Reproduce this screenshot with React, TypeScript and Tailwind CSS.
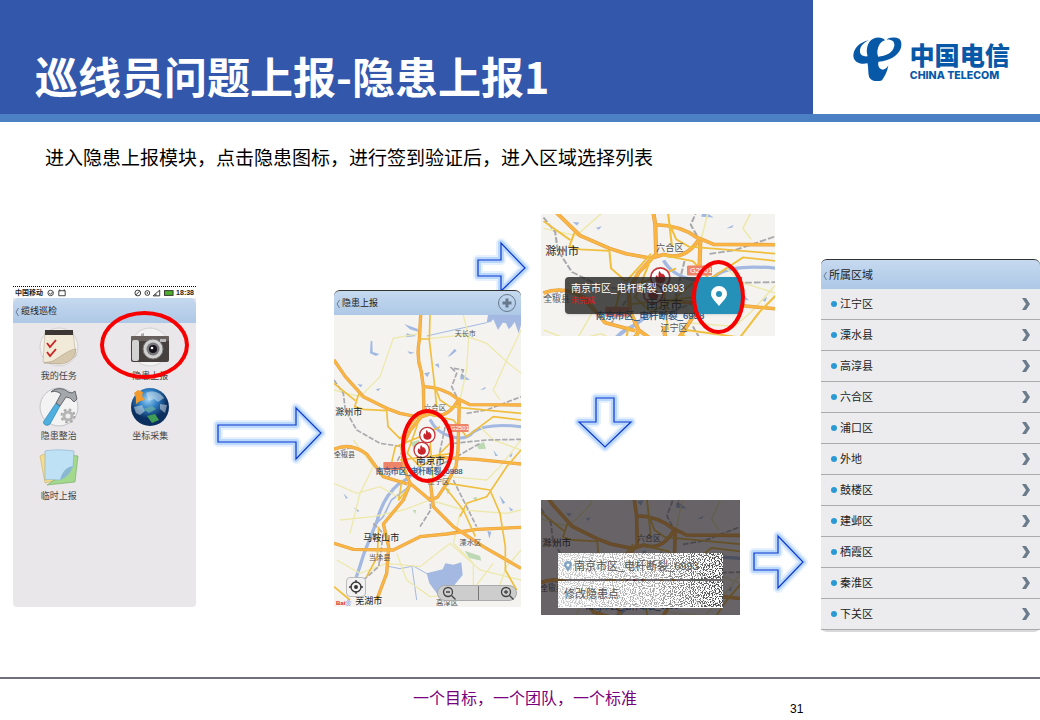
import React from "react";

const CJK = "font-['Liberation_Sans','Noto_Sans_CJK_SC',sans-serif]";

function Logo() {
  return (
    <svg viewBox="156 108 484 142" className="h-12 w-40" role="img" aria-label="中国电信">
      <g fill="#0858a8">
        <path d="M208 122C178 127 160 148 160 169C161 188 180 197 203 192C206 205 204 222 208 234C214 246 230 248 246 244C254 234 263 218 266 198C260 208 254 212 247 211C236 207 234 197 236 187C270 186 296 168 304 146C309 126 302 114 284 114C273 113 266 116 260 120C276 119 286 125 284 140C280 160 258 171 235 172C230 160 233 146 240 134C244 127 250 124 256 122C248 113 232 112 220 118C206 124 200 142 201 160L203 171C188 172 180 166 180 154C181 139 192 128 208 122Z" />
        <text x="330" y="198" fontSize="76" fontWeight="900" className={CJK}>中国电信</text>
        <text x="331" y="239" fontSize="32" fontWeight="800" className="font-['Inter','Liberation_Sans',sans-serif]">CHINA TELECOM</text>
      </g>
    </svg>
  );
}

function Arrow({ points, box, className }: { points: string; box: string; className: string }) {
  return (
    <svg viewBox={box} className={className} aria-hidden="true">
      <g fill="none" strokeLinejoin="round">
        <polygon points={points} stroke="#b9d8fc" strokeOpacity="0.35" strokeWidth="10" />
        <polygon points={points} stroke="#9cc6fa" strokeOpacity="0.6" strokeWidth="6" />
        <polygon points={points} stroke="#0b37cf" strokeWidth="1.2" strokeLinejoin="miter" />
      </g>
    </svg>
  );
}

function Flame({ x, y }: { x: number; y: number }) {
  return (
    <g transform={`translate(${x} ${y})`}>
      <circle r="23" fill="#fff" stroke="#c8363c" strokeWidth="4" />
      <path
        d="M-2-16C2-8 6-5 6-10C12-3 14 2 12 7C10 13 5 14 0 14C-7 14-12 10-12 3C-12-1-10-4-8-6C-7-2-6-1-4-2C-5-7-4-12-2-16Z"
        fill="#c8262c"
      />
    </g>
  );
}

const motorways =
  "M302 105L298 180Q288 230 304 276L310 320L312 400L270 452L246 500L250 560L270 610L330 660L352 652L374 620L408 560L414 510L418 366M42 240L76 290L130 350L200 385L240 400L300 412L330 402Q380 420 414 362M312 320Q370 322 410 355L450 374L603 375M42 508Q90 486 140 522L190 590L262 612M330 600L340 680L400 740L490 800L603 865M270 612L250 660L190 732L206 800L200 880L170 960M42 790L100 808L220 810L300 770L380 762L470 748L603 742M360 532L470 538L603 552";

const places = [
  { name: "天长市", x: 404, y: 168, size: 21, fill: "#555" },
  { name: "六合区", x: 312, y: 391, size: 22, fill: "#555" },
  { name: "滁州市", x: 46, y: 404, size: 27, fill: "#222" },
  { name: "全椒县", x: 42, y: 532, size: 21, fill: "#555" },
  { name: "江宁区", x: 322, y: 613, size: 22, fill: "#555" },
  { name: "马鞍山市", x: 130, y: 784, size: 27, fill: "#222" },
  { name: "当涂县", x: 146, y: 841, size: 22, fill: "#555" },
  { name: "溧水区", x: 418, y: 794, size: 22, fill: "#555" },
  { name: "高淳区", x: 348, y: 975, size: 22, fill: "#555" },
  { name: "芜湖市", x: 106, y: 972, size: 27, fill: "#222" },
];

interface CityMapProps {
  box: string;
  label: string;
  className: string;
  top: number;
  bottom: number;
  scaleY?: number;
}

function CityMap({ box, label, className, top, bottom, scaleY = 1 }: CityMapProps) {
  const toY = (y: number) => (y - top) * scaleY;
  return (
    <svg viewBox={box} preserveAspectRatio="xMidYMid slice" className={className} role="img" aria-label="南京市地图">
      <g transform={`translate(0 ${-top * scaleY}) scale(1 ${scaleY})`}>
        <rect width="700" height="1100" fill="#f5f3f0" />
        <g fill="#a3b9e2">
          <path d="M504 105L500 128L512 126L520 118L534 150L548 128L558 130L566 148L574 140L584 126L596 160L603 135V105Z" />
          <path d="M320 880L368 868L376 850L400 854L424 847L428 885L404 914L352 942L328 910Z" />
          <path d="M152 182L157 184L158 216L178 222L168 228L150 220Z" />
          <path d="M252 132L292 146L296 156L270 148ZM260 160L290 168L258 172Z" />
          <path d="M382 232L404 206L410 212L396 224ZM424 280L450 300L420 298ZM480 330L498 320L494 328ZM312 280L330 276L322 292ZM344 254L356 250L358 264Z" />
          <path d="M112 312L128 314L122 322ZM168 328L182 324L174 334ZM262 214L284 218L270 222ZM502 752L514 756L508 776Z" />
          <path d="M538 646L556 668L548 672ZM566 680L580 690L572 694ZM100 682L118 692L114 696ZM70 640L84 654L78 656ZM520 510L534 528L526 528ZM566 528L578 518L574 532Z" />
        </g>
        <path
          d="M434 812L480 828L484 842L448 834ZM470 496L492 486L498 506L476 508ZM270 488L296 480L306 496L280 502ZM376 624L390 628L384 644ZM278 690L288 690L286 702ZM458 654L470 650L472 666Z"
          fill="#bcd9b4"
        />
        <g fill="none" stroke="#a3b9e2" strokeLinejoin="round">
          <path d="M300 560Q262 600 236 612Q190 650 172 720Q148 780 132 820Q120 860 106 900" strokeWidth="10" />
          <path d="M268 620L214 660L190 710L160 740" strokeWidth="5" />
          <path d="M330 418Q350 460 402 472Q440 480 460 456Q500 428 603 440" strokeWidth="9" />
          <path d="M320 168L400 150L500 128M200 858L240 866L280 858L326 884M276 860L290 960" strokeWidth="3" />
        </g>
        <g fill="none" stroke="#ede9ac" strokeWidth="4">
          <path d="M328 176L430 165L500 190L560 245L603 280M42 330L120 350L180 290L220 175L300 160M430 105L446 170L440 270L420 360" />
          <path d="M603 150L560 240L520 330L540 360M42 610L110 640L180 620L250 660M60 720L160 710L250 690L330 660L430 690L560 700L603 690" />
          <path d="M603 480L540 560L500 600L390 590M100 480L160 560L120 640L90 760M230 820L260 900L330 950L450 940L520 850M420 700L400 790L460 850L460 920" />
          <path d="M50 840L120 880L200 850L300 860L390 790L480 870L603 900M530 940L560 860L603 810M480 440L520 480L603 510" />
        </g>
        <g fill="none" stroke="#a9a9ad" strokeWidth="5" strokeDasharray="16 5">
          <path d="M42 300L70 340L76 390L110 450L180 490L250 500M410 350L395 320L410 280L395 264L430 270L424 290M440 400L500 390L603 350" />
          <path d="M400 490L500 480L603 478M42 520L100 500M250 510L200 600M330 650L332 690L300 740M160 730L190 760L176 860L130 900M400 600L440 680L470 740M380 420L350 560L410 530L480 490" />
        </g>
        <path d={motorways} fill="none" stroke="#e2a143" strokeWidth="10" strokeLinejoin="round" />
        <path d={motorways} fill="none" stroke="#fbb545" strokeWidth="7" strokeLinejoin="round" />
        <g fill="none" stroke="#f0bf3e" strokeWidth="5" strokeLinejoin="round">
          <path d="M330 105L328 180L335 240L342 300L350 380M300 177L330 177M345 320L360 360L390 380L603 400M116 342L104 380L130 388L200 392L204 440L240 476L300 400M42 310L106 362" />
          <path d="M330 404L400 420L440 470L520 410L603 420M300 412L262 520L300 560L350 530L400 480M212 560L226 500L300 470L360 440M330 480L340 610M240 540L400 520" />
          <path d="M384 610L510 630L540 700L556 800L556 870L590 930M374 620L430 690L466 770M420 710L440 670L500 650L560 560L603 510M176 740L172 830L140 890M42 920L90 960M246 600L236 660L268 620" />
        </g>
      </g>
      <g className={CJK}>
        {places
          .filter(({ y }) => y > top + 20 && y < bottom)
          .map(({ name, x, y, size, fill }) => (
            <text key={name} x={x} y={toY(y)} fontSize={size} fill={fill}>{name}</text>
          ))}
        <rect x="386" y={toY(432)} width="60" height="24" rx="3" fill="#ee8467" />
        <text x="393" y={toY(432) + 19} fontSize="18" fill="#fff">G2501</text>
        <rect x="190" y={toY(546)} width="58" height="24" rx="3" fill="#ee8467" />
        <Flame x={322} y={toY(465)} />
        <Flame x={305} y={toY(510)} />
        <text x="288" y={toY(552)} fontSize="29" fill="#222">南京市</text>
        <text x="167" y={toY(581)} fontSize="23" fill="#1d5288" stroke="#1d5288" strokeWidth="0.5">{label}</text>
      </g>
    </svg>
  );
}

function TitleBar({ title, className, children }: { title: string; className: string; children?: React.ReactNode }) {
  return (
    <header className={`flex items-center justify-between rounded-t-md bg-linear-to-b from-[#c6d9ef] to-[#adc8e6] pr-1 pl-0.5 ${className}`}>
      <button className="flex items-center gap-0.5 pt-0.5 text-[#222]">
        <svg viewBox="0 0 4 10" className="h-2.5 w-1" fill="none" stroke="#6b7b8e" aria-hidden="true">
          <path d="M3.5 1L1 5L3.5 9" />
        </svg>
        {title}
      </button>
      {children}
    </header>
  );
}

function TaskIcon() {
  return (
    <svg viewBox="0 0 40 40" className="size-10" aria-hidden="true">
      <circle cx="20" cy="20" r="19" fill="#f3f2f0" stroke="#d2d0d0" />
      <path d="M6 5H34L37 29L20 37L4 35Z" fill="#f2ead8" stroke="#b9ad98" strokeWidth=".6" />
      <path d="M6 3H34V8H6Z" fill="#3c3634" />
      <path d="M37 22C29 23 24 28 14 34L5 36L22 37C30 36 36 32 37 22Z" fill="#d6c8ad" stroke="#a5987f" strokeWidth=".5" />
      <path d="M8 16L11 20L17 13M8 25L11 29L17 22" fill="none" stroke="#cc2222" strokeWidth="1.8" />
    </svg>
  );
}

function CameraIcon() {
  return (
    <svg viewBox="0 0 40 40" className="size-10" aria-hidden="true">
      <circle cx="20" cy="20" r="19" fill="#f3f2f2" stroke="#d2d0d0" />
      <path d="M11 7L14 6V9H11Z" fill="#aaa" />
      <rect x="1" y="9" width="38" height="26" rx="2" fill="#46403e" />
      <rect x="1" y="9" width="38" height="5" rx="1" fill="#67605d" />
      <rect x="2" y="13" width="7" height="21" rx="2" fill="#d2d2d2" />
      <rect x="30" y="12" width="6" height="3" fill="#b8b8b8" />
      <circle cx="23" cy="22" r="10" fill="#cfcfcf" stroke="#757575" />
      <circle cx="23" cy="22" r="6.500" fill="#77777b" />
      <circle cx="23" cy="22" r="4" fill="#15121c" />
      <circle cx="22" cy="21" r="1.300" fill="#fff" />
    </svg>
  );
}

function ToolIcon() {
  return (
    <svg viewBox="0 0 40 40" className="size-10" aria-hidden="true">
      <circle cx="20" cy="20" r="19" fill="#f3f3f4" stroke="#c4c4c8" />
      <path d="M5 34L17 16L21 19L11 37C8 40 3 37 5 34Z" fill="#4fb0df" stroke="#2b83b5" strokeWidth=".7" />
      <path d="M17 16L22 7C18 4 15 4 12 5C17 0 25 1 29 5L33 6L36 4L38 12L35 15L31 11L27 10L21 19Z" fill="#a4a8ac" stroke="#4b4f54" strokeWidth=".8" />
      <circle cx="29" cy="29" r="4" fill="#eee" stroke="#b5b5b5" strokeWidth="3" />
      <circle cx="29" cy="29" r="6.500" fill="none" stroke="#a8a8a8" strokeWidth="2" strokeDasharray="2.600 2.500" />
    </svg>
  );
}

function GlobeIcon() {
  return (
    <svg viewBox="0 0 40 40" className="size-10" aria-hidden="true">
      <defs>
        <radialGradient id="ocean" cx=".45" cy=".3">
          <stop offset="0" stopColor="#9fd3f5" />
          <stop offset=".5" stopColor="#2f7fc4" />
          <stop offset="1" stopColor="#0b2f60" />
        </radialGradient>
      </defs>
      <circle cx="20" cy="20" r="19" fill="url(#ocean)" />
      <path d="M16 6C22 3 30 5 34 11L28 15L24 12L19 14ZM30 17L37 18L35 26L30 22ZM4 20L12 18L15 24L10 28L6 26Z" fill="#dfe9ee" fillOpacity=".5" />
      <path d="M17 29L25 27L29 33L22 36Z" fill="#3f9c55" />
      <path d="M13 22L22 19L26 22L19 26Z" fill="#6fb0a0" fillOpacity=".7" />
      <path d="M4 6L8 3L13 5L12 9L15 13L10 14L6 17L6 11Z" fill="#f29a2e" />
    </svg>
  );
}

function NotesIcon() {
  return (
    <svg viewBox="0 0 40 40" className="size-10" aria-hidden="true">
      <path d="M1 9L10 5L18 33L6 36Z" fill="#f3dc8e" stroke="#c9b264" strokeWidth=".6" />
      <path d="M22 7L39 9L36 35L8 38L20 30Z" fill="#a3d98c" stroke="#74a862" strokeWidth=".6" />
      <path d="M6 4C16 2 26 3 35 4L34 20L21 33C16 33 10 32 6 33Z" fill="#bfe1f6" stroke="#86aecb" strokeWidth=".6" />
      <path d="M34 19C28 20 23 24 21 33C27 31 32 26 34 19Z" fill="#8ab8d2" />
    </svg>
  );
}

const apps = [
  { name: "我的任务", Icon: TaskIcon },
  { name: "隐患上报", Icon: CameraIcon },
  { name: "隐患整治", Icon: ToolIcon },
  { name: "坐标采集", Icon: GlobeIcon },
  { name: "临时上报", Icon: NotesIcon },
];

function StatusBar() {
  return (
    <div className="flex h-3 items-center justify-between border-t border-dotted border-black bg-white px-0.5 text-[7px] leading-none font-bold text-[#222]">
      <span className="flex items-center gap-1">
        中国移动
        <svg viewBox="0 0 22 8" className="h-2 w-5" fill="none" stroke="#333" aria-hidden="true">
          <circle cx="4" cy="4" r="3" />
          <path d="M2.500 4L4 5.500L6 3M13 1.500H20V7H13ZM14 0V2M19 0V2" />
        </svg>
      </span>
      <span className="flex items-center gap-0.5">
        <svg viewBox="0 0 42 8" className="h-2 w-10" fill="none" stroke="#333" aria-hidden="true">
          <circle cx="4" cy="4" r="3" />
          <path d="M2 6L6 2" />
          <circle cx="14" cy="4" r="2.500" />
          <path d="M14 3V5M20 7L27 1V7ZM23 7V5" />
          <rect x="32" y="1.500" width="9" height="5" fill="#4caf2b" />
        </svg>
        18:38
      </span>
    </div>
  );
}

function HomePhone() {
  return (
    <section className="mt-[72px] flex h-[321px] w-[183px] shrink-0 flex-col rounded-b-sm bg-[#e9e7ea]" aria-label="缆线巡检">
      <StatusBar />
      <TitleBar title="缆线巡检" className="h-[25px] text-[9px]" />
      <div className="relative grid grid-cols-2 gap-y-0.5 pt-1">
        {apps.map(({ name, Icon }) => (
          <button key={name} className="flex flex-col items-center text-[9px] leading-[18px] text-[#444]">
            <Icon />
            {name}
          </button>
        ))}
        <div className="absolute -top-3 left-[87px] h-[68px] w-[89px] rounded-[50%] border-4 border-[#f60000]" />
      </div>
    </section>
  );
}

function MapPhone() {
  return (
    <section className="flex w-[187px] flex-col" aria-label="隐患上报">
      <TitleBar title="隐患上报" className="h-[25px] border-t border-[#333] text-[9px]">
        <button aria-label="添加">
          <svg viewBox="0 0 20 20" className="size-5" fill="none" stroke="#67798d" aria-hidden="true">
            <circle cx="10" cy="10" r="8.500" />
            <path d="M10 5.500V14.500M5.500 10H14.500" strokeWidth="3" />
          </svg>
        </button>
      </TitleBar>
      <div className="relative">
        <CityMap box="42 0 561 876" top={105} bottom={1000} label="南京市区_电杆断裂_6988" className="block h-[292px] w-full" />
        <div className="absolute top-[94px] left-[67px] h-[74px] w-[53px] rounded-[50%] border-4 border-[#f60000]" />
        <button aria-label="定位" className="absolute bottom-2.5 left-3 flex size-5 items-center justify-center rounded-sm border border-[#bbb] bg-[#f1f1f1]">
          <svg viewBox="0 0 14 14" className="size-3.5" fill="none" stroke="#333" strokeWidth="1.300" aria-hidden="true">
            <circle cx="7" cy="7" r="5" />
            <circle cx="7" cy="7" r="1.300" fill="#333" />
            <path d="M7 0V2.500M7 11.500V14M0 7H2.500M11.500 7H14" />
          </svg>
        </button>
        <span className="absolute bottom-0 left-0.5 text-[6px] leading-2 font-bold text-[#d9262c]">Bai<span className="text-[#2b47d6]">❀</span></span>
        <div className="absolute right-1 bottom-1.5 flex h-4 w-20 rounded-full border border-[#aaa] bg-[#cdcdcd]">
          <button aria-label="缩小" className="flex-1 border-r border-[#777] pl-1">
            <svg viewBox="0 0 14 14" className="size-3.5" fill="none" stroke="#444" strokeWidth="1.300" aria-hidden="true">
              <circle cx="6" cy="6" r="4.500" /><path d="M4 6H8M9.500 9.500L13.500 13.500" />
            </svg>
          </button>
          <button aria-label="放大" className="flex flex-1 justify-end pr-0.5">
            <svg viewBox="0 0 14 14" className="size-3.5" fill="none" stroke="#444" strokeWidth="1.300" aria-hidden="true">
              <circle cx="6" cy="6" r="4.500" /><path d="M4 6H8M6 4V8M9.500 9.500L13.500 13.500" />
            </svg>
          </button>
        </div>
      </div>
    </section>
  );
}

function PopupMap() {
  return (
    <section className="relative w-[234px]" aria-label="隐患详情">
      <CityMap box="36 0 561 293" top={290} bottom={625} scaleY={0.87} label="南京市区_电杆断裂_6998" className="block h-[122px] w-full" />
      <div className="absolute top-[63px] left-6 flex h-[37px] w-[177px] rounded-l-sm bg-[#222]/80 shadow-sm">
        <div className="flex-1 pt-1 pl-1.5 text-[10px] leading-4 whitespace-nowrap text-white">
          南京市区_电杆断裂_6993
          <p className="text-[8px] leading-2 text-[#e01818]">未完成</p>
        </div>
        <button aria-label="选择位置" className="flex w-[46px] items-center justify-center bg-[#2590b8]">
          <svg viewBox="0 0 16 20" className="h-5 w-4" aria-hidden="true">
            <path fillRule="evenodd" d="M8 0A8 8 0 0 0 0 8C0 12 5 16 8 20C11 16 16 12 16 8A8 8 0 0 0 8 0ZM8 5A3 3 0 1 1 8 11A3 3 0 0 1 8 5Z" fill="#fff" />
          </svg>
        </button>
      </div>
      <div className="absolute top-[46px] left-[151px] h-[74px] w-[53px] rounded-[50%] border-4 border-[#f60000]" />
    </section>
  );
}

function Speckle() {
  return (
    <svg className="absolute inset-0 h-full w-full" aria-hidden="true">
      <defs>
        <filter id="speckle" x="0" y="0" width="100%" height="100%">
          <feTurbulence type="fractalNoise" baseFrequency=".9" numOctaves="1" seed="4" />
          <feColorMatrix values="0 0 0 0 .05  0 0 0 0 .05  0 0 0 0 .05  14 0 0 0 -7" />
        </filter>
        <linearGradient id="fade">
          <stop offset="0" stopColor="#444" />
          <stop offset=".6" stopColor="#777" />
          <stop offset="1" stopColor="#fff" />
        </linearGradient>
        <mask id="fadeMask"><rect width="100%" height="100%" fill="url(#fade)" /></mask>
      </defs>
      <g mask="url(#fadeMask)"><rect width="100%" height="100%" filter="url(#speckle)" /></g>
    </svg>
  );
}

function DialogMap() {
  return (
    <section className="relative w-[199px] shrink-0" aria-label="隐患操作">
      <CityMap box="42 0 558 322" top={276} bottom={560} label="南京市区_电杆断裂_6998" className="block h-[115px] w-full" />
      <div className="absolute inset-0 bg-[#1a161c]/65" />
      <div className="absolute top-[53px] left-[17px] flex w-[165px] flex-col gap-0.5 text-[11px] text-[#555]">
        <div className="relative flex h-[26px] items-center gap-0.5 bg-white pl-1.5">
          <Speckle />
          <svg viewBox="0 0 8 11" className="relative h-[11px] w-2" aria-hidden="true">
            <path d="M4 0A4 4 0 0 0 0 4C0 6 3 8 4 11C5 8 8 6 8 4A4 4 0 0 0 4 0Z" fill="#7fa4c6" />
            <circle cx="4" cy="4" r="1.500" fill="#fff" />
          </svg>
          <span className="relative">南京市区_电杆断裂_6993</span>
        </div>
        <button className="relative flex h-[27px] items-center bg-white pl-1.5">
          <Speckle />
          <span className="relative">修改隐患点</span>
        </button>
      </div>
    </section>
  );
}

const areas = ["江宁区", "溧水县", "高淳县", "六合区", "浦口区", "外地", "鼓楼区", "建邺区", "栖霞区", "秦淮区", "下关区"];

function AreaList() {
  return (
    <section className="mt-[45px] ml-[13px] min-w-[200px] flex-1 rounded-md border-b-2 border-[#d8d8da] bg-[#ececee]" aria-label="所属区域">
      <TitleBar title="所属区域" className="h-[30px] border-t border-[#333] text-[11px]" />
      <ul>
        {areas.map((area) => (
          <li key={area} className="border-b border-[#ababab]">
            <button className="flex h-[30px] w-full items-center gap-[3px] px-2.5 text-[11px] text-[#222]">
              <span className="size-1.5 rounded-full bg-[#2a9ad6]" />
              {area}
              <svg viewBox="0 0 8 12" className="ml-auto h-3 w-2" aria-hidden="true">
                <path d="M0 0H4L8 6L4 12H0L4 6Z" fill="#6b7c8c" />
              </svg>
            </button>
          </li>
        ))}
      </ul>
    </section>
  );
}

export default function App() {
  return (
    <div className={`flex min-h-screen flex-col bg-white ${CJK}`}>
      <header className="flex h-[122px] border-b-8 border-[#4b80c4]">
        <div className="flex flex-1 items-end bg-[#3357ab] pb-2.5 pl-[35px]">
          <h1 className="text-[43px] leading-[58px] font-bold whitespace-nowrap text-white font-['Noto_Sans_CJK_SC',sans-serif]">巡线员问题上报-隐患上报1</h1>
        </div>
        <div className="flex w-[227px] items-center justify-center pt-1 pl-2.5">
          <Logo />
        </div>
      </header>
      <p className="mt-[23px] pl-[45px] text-[19px] leading-7 text-black">进入隐患上报模块，点击隐患图标，进行签到验证后，进入区域选择列表</p>
      <main className="mt-[41px] flex items-start pl-[13px]">
        <HomePhone />
        <Arrow box="214 404 112 60" points="218,425 296,425 296,408 321,433 296,459 296,442 218,442" className="mt-[190px] ml-[18px] h-[60px] w-28 shrink-0 overflow-visible" />
        <div className="mt-6 ml-2 flex w-[187px] shrink-0 flex-col">
          <Arrow box="472 238 56 52" points="477,260 500,260 500,243 524,268 500,291 500,276 477,276" className="-mr-2 h-[52px] w-14 self-end overflow-visible" />
          <MapPhone />
        </div>
        <div className="ml-5 flex w-[267px] shrink-0 flex-col">
          <PopupMap />
          <Arrow box="573 392 64 60" points="596,398 614,398 614,422 631,422 605,447 579,422 596,422" className="mt-14 ml-8 h-[60px] w-16 overflow-visible" />
          <div className="mt-12 flex items-center gap-2.5">
            <DialogMap />
            <Arrow box="750 532 58 60" points="754,553 778,553 778,536 803,562 778,588 778,570 754,570" className="mt-2 h-[60px] w-[58px] shrink-0 overflow-visible" />
          </div>
        </div>
        <AreaList />
      </main>
      <footer className="mt-auto grid h-[43px] grid-cols-[1fr_auto_1fr] border-t-2 border-[#70707c] pl-2.5">
        <span />
        <p className="pt-2 text-[16px] leading-6 text-[#78007c]">一个目标，一个团队，一个标准</p>
        <span className="pt-[22px] pl-[153px] text-[12px] leading-4 text-black">31</span>
      </footer>
    </div>
  );
}
